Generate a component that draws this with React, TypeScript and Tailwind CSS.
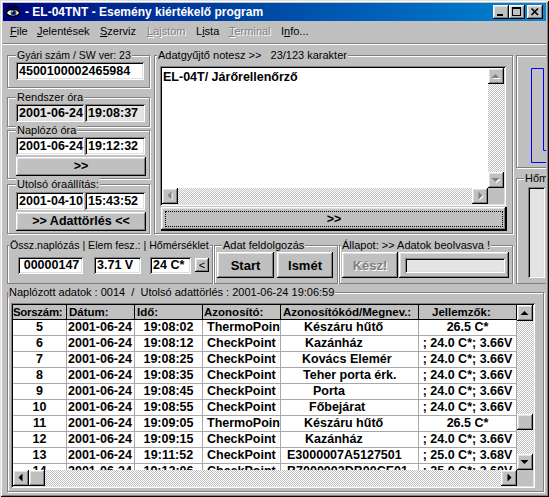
import React from "react";

const RAISED =
  "shadow-[inset_-1px_-1px_0_#000000,inset_1px_1px_0_#ffffff,inset_-2px_-2px_0_#808080,inset_2px_2px_0_#dfdfdf]";
const SUNKEN =
  "shadow-[inset_1px_1px_0_#808080,inset_-1px_-1px_0_#ffffff,inset_2px_2px_0_#000000,inset_-2px_-2px_0_#dfdfdf]";
const DITHER =
  "bg-[image:repeating-conic-gradient(#c0c0c0_0%_25%,#ffffff_0%_50%)] bg-[length:2px_2px]";

type GP = { label?: string; className?: string; labelClass?: string; size?: string; children?: React.ReactNode };
function Group({ label, className = "", labelClass = "left-[8px]", size = "text-[11px]", children }: GP) {
  return (
    <div
      className={`relative shrink-0 border border-[#808080] shadow-[inset_1px_1px_0_#ffffff,1px_1px_0_#ffffff] ${className}`}
    >
      {label ? (
        <span
          className={`absolute top-[-7px] bg-[#c0c0c0] px-[1px] leading-[12px] whitespace-pre ${size} ${labelClass}`}
        >
          {label}
        </span>
      ) : null}
      {children}
    </div>
  );
}

function Field({ children, className = "" }: { children?: React.ReactNode; className?: string }) {
  return (
    <div
      className={`${SUNKEN} shrink-0 flex items-center text-[12.5px] font-bold leading-none whitespace-nowrap overflow-hidden ${className}`}
    >
      {children}
    </div>
  );
}

function Btn({ children, className = "" }: { children?: React.ReactNode; className?: string }) {
  return (
    <div
      className={`${RAISED} shrink-0 bg-[#c0c0c0] flex items-center justify-center font-bold leading-none ${className}`}
    >
      {children}
    </div>
  );
}

type Dir = "up" | "down" | "left" | "right";
const TRI: Record<Dir, string> = {
  up: "3.5,10 11.5,10 7.5,6",
  down: "3.5,6 11.5,6 7.5,10",
  left: "9.5,3.5 9.5,11.5 5.5,7.5",
  right: "6.5,3.5 6.5,11.5 10.5,7.5",
};
function ArrowBtn({ dir, disabled = false }: { dir: Dir; disabled?: boolean }) {
  return (
    <div className={`${RAISED} shrink-0 w-[16px] h-[16px] bg-[#c0c0c0]`}>
      <svg width="16" height="16" viewBox="0 0 16 16">
        {disabled ? (
          <>
            <polygon points={TRI[dir]} fill="#ffffff" transform="translate(1,1)" />
            <polygon points={TRI[dir]} fill="#808080" />
          </>
        ) : (
          <polygon points={TRI[dir]} fill="#000000" />
        )}
      </svg>
    </div>
  );
}

function VScroll({ disabled = false, thumb = false }: { disabled?: boolean; thumb?: boolean }) {
  return (
    <div className="w-[16px] shrink-0 flex flex-col">
      <ArrowBtn dir="up" disabled={disabled} />
      <div className={`flex-1 flex flex-col ${DITHER}`}>
        {thumb ? (
          <>
            <div className="h-[93px] shrink-0" />
            <div className={`${RAISED} w-[16px] h-[16px] bg-[#c0c0c0]`} />
          </>
        ) : null}
      </div>
      <ArrowBtn dir="down" disabled={disabled} />
    </div>
  );
}

function HScroll({ disabled = false, thumb = false, className = "" }: { disabled?: boolean; thumb?: boolean; className?: string }) {
  return (
    <div className={`h-[16px] shrink-0 flex ${className}`}>
      <ArrowBtn dir="left" disabled={disabled} />
      {thumb ? <div className={`${RAISED} w-[16px] h-[16px] bg-[#c0c0c0] shrink-0`} /> : null}
      <div className={`flex-1 ${DITHER}`} />
      <ArrowBtn dir="right" disabled={disabled} />
    </div>
  );
}

function EyeIcon() {
  return (
    <svg width="16" height="16" viewBox="0 0 16 16" className="shrink-0">
      <path d="M1 9 C4 4 12 4 15 9 C12 13.5 4 13.5 1 9Z" fill="#ffffff" stroke="#000000" strokeWidth="1.5" />
      <circle cx="8.5" cy="8.8" r="3" fill="#2a4a8a" />
      <circle cx="8.5" cy="8.8" r="1.4" fill="#000000" />
      <circle cx="7.3" cy="7.8" r="0.7" fill="#ffffff" />
      <path d="M2 5 C5 1.5 11 1.5 14 5" fill="none" stroke="#000000" strokeWidth="1.6" />
    </svg>
  );
}

function TBtn({ kind }: { kind: "min" | "max" | "close" }) {
  return (
    <div className={`${RAISED} w-[16px] h-[14px] bg-[#c0c0c0] shrink-0`}>
      <svg width="16" height="14" viewBox="0 0 16 14">
        {kind === "min" ? <rect x="4" y="9" width="6" height="2" fill="#000000" /> : null}
        {kind === "max" ? (
          <>
            <rect x="3.5" y="2.5" width="8" height="8" fill="none" stroke="#000000" />
            <rect x="3" y="3" width="9" height="1" fill="#000000" />
          </>
        ) : null}
        {kind === "close" ? (
          <path d="M4.5 3.5 L11 10 M11 3.5 L4.5 10" stroke="#000000" strokeWidth="1.7" />
        ) : null}
      </svg>
    </div>
  );
}

function TitleBar() {
  return (
    <div className="h-[18px] shrink-0 flex items-center bg-linear-to-r from-[#000080] to-[#1084d0] pl-[2px] pr-[3px]">
      <EyeIcon />
      <span className="ml-[4px] text-white font-bold text-[12px] leading-none whitespace-nowrap">
        - EL-04TNT - Esemény kiértékelő program
      </span>
      <div className="ml-auto flex items-center">
        <TBtn kind="min" />
        <TBtn kind="max" />
        <div className="w-[2px]" />
        <TBtn kind="close" />
      </div>
    </div>
  );
}

function MenuItem({ pre, u, post, w, disabled = false }: { pre: string; u: string; post: string; w: string; disabled?: boolean }) {
  return (
    <div
      className={`shrink-0 whitespace-nowrap ${w} ${
        disabled ? "text-[#808080] [text-shadow:1px_1px_0_#ffffff]" : "text-black"
      }`}
    >
      {pre}
      <span className="underline underline-offset-[1px]">{u}</span>
      {post}
    </div>
  );
}

function MenuBar() {
  return (
    <div className="h-[20px] shrink-0 flex items-center pl-[7px] text-[11px] leading-none">
      <MenuItem pre="" u="F" post="ile" w="w-[27px]" />
      <MenuItem pre="" u="J" post="elentések" w="w-[63px]" />
      <MenuItem pre="" u="S" post="zerviz" w="w-[47px]" />
      <MenuItem pre="" u="L" post="ajstom" w="w-[49px]" disabled />
      <MenuItem pre="L" u="i" post="sta" w="w-[33px]" />
      <MenuItem pre="" u="T" post="erminal" w="w-[52px]" disabled />
      <MenuItem pre="I" u="n" post="fo..." w="w-[40px]" />
    </div>
  );
}

const ROWS: { n: number; t: string; id: string; code: string; pad: string; j: string }[] = [
  { n: 5, t: "19:08:02", id: "ThermoPoint", code: "Készáru hűtő", pad: "pl-[23px]", j: "26.5 C*" },
  { n: 6, t: "19:08:12", id: "CheckPoint", code: "Kazánház", pad: "pl-[24px]", j: "; 24.0 C*; 3.66V" },
  { n: 7, t: "19:08:25", id: "CheckPoint", code: "Kovács Elemér", pad: "pl-[21px]", j: "; 24.0 C*; 3.66V" },
  { n: 8, t: "19:08:35", id: "CheckPoint", code: "Teher porta érk.", pad: "pl-[22px]", j: "; 24.0 C*; 3.66V" },
  { n: 9, t: "19:08:45", id: "CheckPoint", code: "Porta", pad: "pl-[32px]", j: "; 24.0 C*; 3.66V" },
  { n: 10, t: "19:08:55", id: "CheckPoint", code: "Főbejárat", pad: "pl-[28px]", j: "; 24.0 C*; 3.66V" },
  { n: 11, t: "19:09:05", id: "ThermoPoint", code: "Készáru hűtő", pad: "pl-[23px]", j: "26.5 C*" },
  { n: 12, t: "19:09:15", id: "CheckPoint", code: "Kazánház", pad: "pl-[24px]", j: "; 24.0 C*; 3.66V" },
  { n: 13, t: "19:11:52", id: "CheckPoint", code: "E3000007A5127501", pad: "pl-[6px]", j: "; 25.0 C*; 3.68V" },
  { n: 14, t: "19:12:06", id: "CheckPoint", code: "B7000003DB00CE01", pad: "pl-[6px]", j: "; 25.0 C*; 3.60V" },
];

const HCELL = "shrink-0 h-full border-r border-black overflow-hidden whitespace-nowrap";
const BCELL = "shrink-0 h-full border-r border-[#a8a8a8] overflow-hidden whitespace-nowrap";

function Grid() {
  return (
    <div className={`ml-[3px] mt-[10px] w-[524px] h-[185px] p-[2px] bg-white ${SUNKEN} flex flex-col`}>
      <div className="flex h-[165px] shrink-0">
        <div className="w-[504px] shrink-0 overflow-hidden flex flex-col">
          <div className="h-[15px] shrink-0 flex bg-[#c0c0c0] border-b border-black text-[11.5px] font-bold leading-[14px]">
            <div className={`${HCELL} w-[54px] tracking-[-0.3px]`}>Sorszám:</div>
            <div className={`${HCELL} w-[68px] pl-[2px]`}>Dátum:</div>
            <div className={`${HCELL} w-[68px] pl-[2px]`}>Idő:</div>
            <div className={`${HCELL} w-[78px] pl-[1px]`}>Azonosító:</div>
            <div className={`${HCELL} w-[138px] pl-[2px]`}>Azonosítókód/Megnev.:</div>
            <div className={`${HCELL} w-[98px] pl-[13px]`}>Jellemzők:</div>
          </div>
          {ROWS.map((r) => (
            <div
              key={r.n}
              className="h-[16px] shrink-0 flex border-b border-[#a8a8a8] text-[12.5px] font-bold leading-[15px]"
            >
              <div className={`${BCELL} w-[54px] text-center`}>{r.n}</div>
              <div className={`${BCELL} w-[68px] pl-[1px]`}>2001-06-24</div>
              <div className={`${BCELL} w-[68px] text-center`}>{r.t}</div>
              <div className={`${BCELL} w-[78px] pl-[4px]`}>{r.id}</div>
              <div className={`${BCELL} w-[138px] ${r.pad}`}>{r.code}</div>
              <div className={`${BCELL} w-[98px] text-center`}>{r.j}</div>
            </div>
          ))}
        </div>
        <VScroll thumb />
      </div>
      <div className="flex h-[16px] shrink-0">
        <HScroll thumb className="w-[504px]" />
        <div className="w-[16px] shrink-0 bg-[#c0c0c0]" />
      </div>
    </div>
  );
}

export default function App() {
  return (
    <div className="w-[549px] h-[497px] overflow-hidden bg-[#c0c0c0] font-['Liberation_Sans',Arial,sans-serif] text-black">
      <div className="w-[549px] h-[497px] p-[3px] flex flex-col shadow-[inset_1px_1px_0_#dfdfdf,inset_-1px_-1px_0_#000000,inset_2px_2px_0_#ffffff,inset_-2px_-2px_0_#808080]">
        <TitleBar />
        <MenuBar />
        <div className="mt-[2px] h-[2px] shrink-0 border-t border-t-[#808080] border-b border-b-white" />

        <div className="flex shrink-0 overflow-hidden">
          {/* left part */}
          <div className="w-[510px] shrink-0 pl-[4px] flex flex-col">
            <div className="flex items-start">
              {/* left column */}
              <div className="w-[143px] shrink-0 flex flex-col">
                <Group label="Gyári szám / SW ver: 23" size="text-[10.5px]" className="mt-[10px] h-[33px] w-[143px] pl-[8px] pt-[6px]">
                  <Field className="w-[128px] h-[18px] bg-white pl-[3px]">4500100002465984</Field>
                </Group>
                <Group label="Rendszer óra" className="mt-[9px] h-[30px] w-[143px] pl-[8px] pt-[6px]">
                  <div className="flex">
                    <Field className="w-[68px] h-[18px] bg-[#e4e4e4] pl-[3px]">2001-06-24</Field>
                    <Field className="ml-[1px] w-[60px] h-[18px] bg-[#e4e4e4] pl-[3px]">19:08:37</Field>
                  </div>
                </Group>
                <Group label="Naplózó óra" className="mt-[3px] h-[49px] w-[143px] pl-[8px] pt-[6px]">
                  <div className="flex">
                    <Field className="w-[68px] h-[18px] bg-white pl-[3px]">2001-06-24</Field>
                    <Field className="ml-[1px] w-[60px] h-[18px] bg-white pl-[3px]">19:12:32</Field>
                  </div>
                  <Btn className="mt-[2px] w-[130px] h-[19px] text-[12.5px]">&gt;&gt;</Btn>
                </Group>
                <Group label="Utolsó óraállítás:" className="mt-[5px] h-[50px] w-[143px] pl-[8px] pt-[7px]">
                  <div className="flex">
                    <Field className="w-[68px] h-[18px] bg-white pl-[3px]">2001-04-10</Field>
                    <Field className="ml-[1px] w-[60px] h-[18px] bg-white pl-[3px]">15:43:52</Field>
                  </div>
                  <Btn className="mt-[2px] w-[130px] h-[19px] text-[12.5px]">&gt;&gt; Adattörlés &lt;&lt;</Btn>
                </Group>
              </div>

              {/* middle group */}
              <Group
                label={"Adatgyűjtő notesz >>   23/123 karakter"}
                labelClass="left-[2px]"
                className="ml-[4px] mt-[10px] w-[359px] h-[179px] flex flex-col"
              >
                <div className={`ml-[5px] mt-[10px] w-[346px] h-[140px] p-[2px] bg-white ${SUNKEN} flex flex-col`}>
                  <div className="flex h-[120px] shrink-0">
                    <div className="w-[326px] shrink-0 pl-[1px] pt-[3px] text-[12.5px] font-bold leading-[13px] whitespace-pre">
                      EL-04T/ Járőrellenőrző
                    </div>
                    <VScroll disabled />
                  </div>
                  <div className="flex h-[16px] shrink-0">
                    <HScroll disabled className="w-[326px]" />
                    <div className="w-[16px] shrink-0 bg-[#c0c0c0]" />
                  </div>
                </div>
                <div className="ml-[6px] mt-[1px] w-[346px] h-[24px] p-[4px] bg-[#c0c0c0] shadow-[inset_-2px_-2px_0_#000000,inset_1px_1px_0_#ffffff,inset_-3px_-3px_0_#808080,inset_2px_2px_0_#dfdfdf]">
                  <div className="h-full border border-dotted border-black flex items-center justify-center text-[12.5px] font-bold leading-none">
                    &gt;&gt;
                  </div>
                </div>
              </Group>
            </div>

            {/* bottom row */}
            <div className="flex items-start mt-[11px]">
              <Group
                label="Össz.naplózás | Elem fesz.: | Hőmérséklet"
                labelClass="left-[1px]"
                size="text-[10.6px]"
                className="w-[206px] h-[39px] flex items-start"
              >
                <Field className="ml-[10px] mt-[11px] w-[65px] h-[17px] bg-white justify-center pl-[2px]">00000147</Field>
                <Field className="ml-[11px] mt-[11px] w-[47px] h-[17px] bg-white pl-[3px]">3.71 V</Field>
                <Field className="ml-[9px] mt-[11px] w-[41px] h-[17px] bg-white pl-[3px]">24 C*</Field>
                <div className={`${RAISED} ml-[4px] mt-[12px] w-[14px] h-[14px] shrink-0 bg-[#c0c0c0] flex items-center justify-center text-[11px] leading-none`}>
                  &lt;
                </div>
              </Group>
              <Group label="Adat feldolgozás" labelClass="left-[7px]" className="ml-[1px] w-[124px] h-[39px] flex items-start">
                <Btn className="ml-[2px] mt-[6px] w-[57px] h-[26px] text-[13px]">Start</Btn>
                <Btn className="ml-[3px] mt-[6px] w-[56px] h-[26px] text-[13px]">Ismét</Btn>
              </Group>
              <Group
                label="Állapot: >> Adatok beolvasva !"
                labelClass="left-[1px]"
                className="ml-[1px] w-[174px] h-[39px] flex items-start"
              >
                <Btn className="ml-[2px] mt-[6px] w-[56px] h-[26px] text-[13px] text-[#808080] [text-shadow:1px_1px_0_#ffffff]">
                  Kész!
                </Btn>
                <div className={`${RAISED} ml-[1px] mt-[6px] w-[110px] h-[26px] shrink-0 bg-[#c0c0c0] pl-[6px] pt-[6px]`}>
                  <div className={`${SUNKEN} w-[100px] h-[15px] bg-[#e4e4e4]`} />
                </div>
              </Group>
            </div>
          </div>

          {/* right column (clipped by window edge) */}
          <div className="w-[33px] shrink-0 overflow-hidden flex flex-col">
            <Group className="ml-[3px] mt-[10px] w-[60px] h-[113px] pl-[13px] pt-[11px]">
              <svg width="40" height="100" viewBox="0 0 40 100">
                <path
                  d="M1.5 1.5 H13.5 V83.5 H40 M1.5 1.5 V95.5 H40"
                  fill="none"
                  stroke="#0000ff"
                  strokeWidth="1"
                />
              </svg>
            </Group>
            <Group label="Hőmérséklet" labelClass="left-[7px]" className="ml-[3px] mt-[10px] w-[60px] h-[106px] pl-[11px] pt-[8px]">
              <div className={`${SUNKEN} w-[17px] h-[91px] bg-[#e4e4e4]`} />
            </Group>
          </div>
        </div>

        {/* bottom big group */}
        <Group
          label="Naplózott adatok : 0014  /  Utolsó adattörlés : 2001-06-24 19:06:59"
          labelClass="left-[0px]"
          className="ml-[4px] mt-[8px] w-[537px] h-[200px] flex flex-col"
        >
          <Grid />
        </Group>
      </div>
    </div>
  );
}
